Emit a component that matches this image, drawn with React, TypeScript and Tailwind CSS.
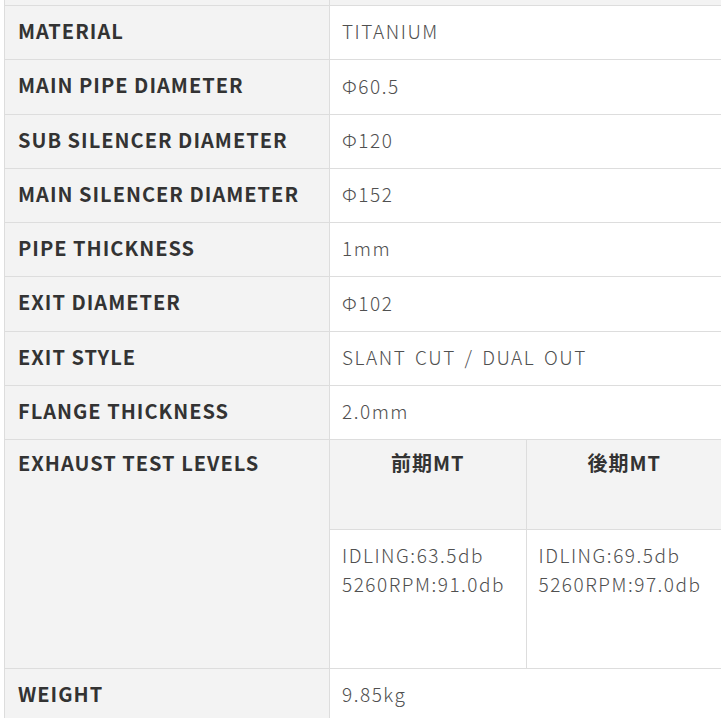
const specs: { label: string; value: string }[] = [
  { label: 'MATERIAL', value: 'TITANIUM' },
  { label: 'MAIN PIPE DIAMETER', value: 'Φ60.5' },
  { label: 'SUB SILENCER DIAMETER', value: 'Φ120' },
  { label: 'MAIN SILENCER DIAMETER', value: 'Φ152' },
  { label: 'PIPE THICKNESS', value: '1mm' },
  { label: 'EXIT DIAMETER', value: 'Φ102' },
  { label: 'EXIT STYLE', value: 'SLANT CUT / DUAL OUT' },
  { label: 'FLANGE THICKNESS', value: '2.0mm' },
];

const levels = [
  { head: '前期MT', lines: ['IDLING:63.5db', '5260RPM:91.0db'] },
  { head: '後期MT', lines: ['IDLING:69.5db', '5260RPM:97.0db'] },
];

const labelCls =
  "bg-[#f3f3f3] border-r border-[#dddddd] pl-[13px] text-[20px] font-bold tracking-[0.05em] text-[#333333] [font-family:'Noto_Sans_CJK_JP','Noto_Sans',sans-serif]";
const valueCls =
  "pl-[12px] text-[19px] font-light tracking-[0.08em] [word-spacing:3px] text-[#505050] [font-family:'Noto_Sans_CJK_JP','Noto_Sans',sans-serif]";

export default function App() {
  return (
    <div className="w-[721px] h-[718px] overflow-hidden bg-white">
      <div className="ml-[4px] w-[719px] border-l border-[#dddddd]">
        {/* tail of the previous row */}
        <div className="grid grid-cols-[325px_1fr] h-[6px] border-b border-[#dddddd]">
          <div className="bg-[#f3f3f3] border-r border-[#dddddd]" />
          <div className="bg-[#f3f3f3]" />
        </div>

        {specs.map((s) => (
          <div key={s.label} className="grid grid-cols-[325px_1fr] h-[54.25px] border-b border-[#dddddd]">
            <div className={`${labelCls} flex items-center pb-[3px]`}>{s.label}</div>
            <div className={`${valueCls} flex items-center pb-[2px]`}>{s.value}</div>
          </div>
        ))}

        <div className="grid grid-cols-[325px_1fr] h-[229px] border-b border-[#dddddd]">
          <div className={`${labelCls} pt-[8px] leading-[30px]`}>EXHAUST TEST LEVELS</div>
          <div className="grid grid-cols-2 grid-rows-[90px_1fr]">
            {levels.map((l) => (
              <div
                key={l.head}
                className="bg-[#f3f3f3] border-b border-r border-[#dddddd] pt-[8px] text-center text-[20px] leading-[30px] font-bold tracking-[0.05em] text-[#333333] [font-family:'Noto_Sans_CJK_JP','Noto_Sans',sans-serif]"
              >
                {l.head}
              </div>
            ))}
            {levels.map((l) => (
              <div key={l.lines[0]} className={`${valueCls} border-r border-[#dddddd] pt-[10px] leading-[29px]`}>
                {l.lines.map((t) => (
                  <div key={t}>{t}</div>
                ))}
              </div>
            ))}
          </div>
        </div>

        <div className="grid grid-cols-[325px_1fr] h-[54.25px] border-b border-[#dddddd]">
          <div className={`${labelCls} flex items-center pb-[3px]`}>WEIGHT</div>
          <div className={`${valueCls} flex items-center pb-[2px]`}>9.85kg</div>
        </div>
      </div>
    </div>
  );
}
